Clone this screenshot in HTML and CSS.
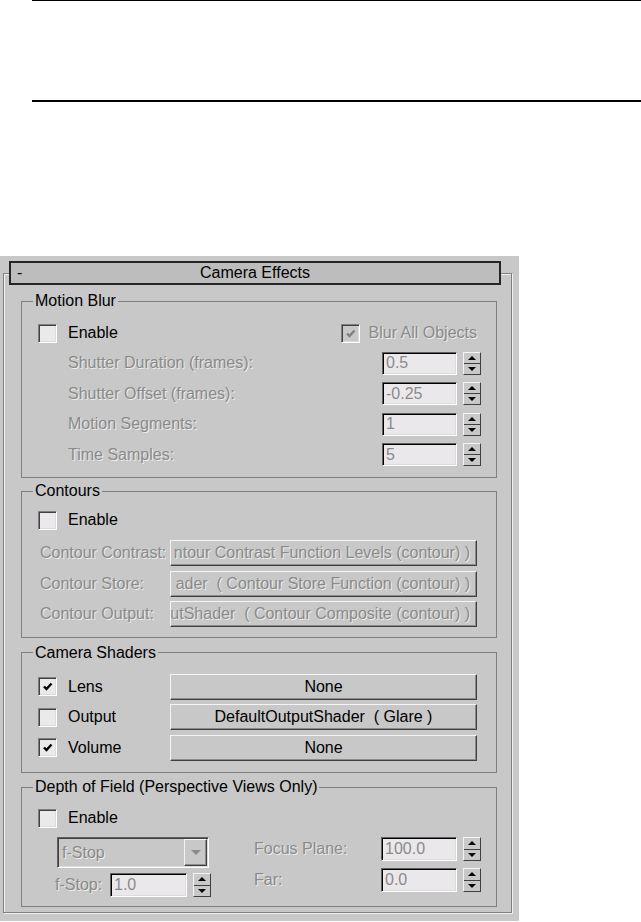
FILE: index.html
```html
<!DOCTYPE html>
<html lang="en">
<head>
    <meta charset="UTF-8">
    <meta name="viewport" content="width=device-width, initial-scale=1.0">
    <title>Camera Effects</title>
    <link rel="stylesheet" href="styles.css">
</head>
<body>
    <div class="doc-rules"></div>

    <div class="panel">
        <div class="rollout-title">
            <span class="rollout-toggle">-</span>
            <span>Camera Effects</span>
        </div>

        <div class="rollout">
            <!-- Motion Blur -->
            <fieldset class="group group-motion">
                <legend>Motion Blur</legend>
                <div class="row-enable">
                    <label class="check-item"><span class="check"></span>Enable</label>
                    <label class="check-item is-disabled"><span class="check is-disabled"><svg viewBox="0 0 13 13"><path d="M3 6.5 L5.5 9 L10.5 3.5"/></svg></span>Blur All Objects</label>
                </div>
                <div class="param-row">
                    <span class="param-label">Shutter Duration (frames):</span>
                    <span class="field">0.5</span>
                    <span class="spin"><span class="spin-up"></span><span class="spin-down"></span></span>
                </div>
                <div class="param-row">
                    <span class="param-label">Shutter Offset (frames):</span>
                    <span class="field">-0.25</span>
                    <span class="spin"><span class="spin-up"></span><span class="spin-down"></span></span>
                </div>
                <div class="param-row">
                    <span class="param-label">Motion Segments:</span>
                    <span class="field">1</span>
                    <span class="spin"><span class="spin-up"></span><span class="spin-down"></span></span>
                </div>
                <div class="param-row">
                    <span class="param-label">Time Samples:</span>
                    <span class="field">5</span>
                    <span class="spin"><span class="spin-up"></span><span class="spin-down"></span></span>
                </div>
            </fieldset>

            <!-- Contours -->
            <fieldset class="group group-contours">
                <legend>Contours</legend>
                <div class="row-enable">
                    <label class="check-item"><span class="check"></span>Enable</label>
                </div>
                <div class="button-rows">
                    <div class="button-row">
                        <span class="button-label">Contour Contrast:</span>
                        <span class="btn is-clipped"><span>ntour Contrast Function Levels (contour) )</span></span>
                    </div>
                    <div class="button-row">
                        <span class="button-label">Contour Store:</span>
                        <span class="btn is-clipped"><span>ader&nbsp; ( Contour Store Function (contour) )</span></span>
                    </div>
                    <div class="button-row">
                        <span class="button-label">Contour Output:</span>
                        <span class="btn is-clipped"><span>utShader&nbsp; ( Contour Composite (contour) )</span></span>
                    </div>
                </div>
            </fieldset>

            <!-- Camera Shaders -->
            <fieldset class="group group-shaders">
                <legend>Camera Shaders</legend>
                <div class="shader-rows">
                    <div class="shader-row">
                        <label class="check-item"><span class="check"><svg viewBox="0 0 13 13"><path d="M3 6.5 L5.5 9 L10.5 3.5"/></svg></span>Lens</label>
                        <span class="btn is-active">None</span>
                    </div>
                    <div class="shader-row">
                        <label class="check-item"><span class="check"></span>Output</label>
                        <span class="btn is-active">DefaultOutputShader&nbsp; ( Glare )</span>
                    </div>
                    <div class="shader-row">
                        <label class="check-item"><span class="check"><svg viewBox="0 0 13 13"><path d="M3 6.5 L5.5 9 L10.5 3.5"/></svg></span>Volume</label>
                        <span class="btn is-active">None</span>
                    </div>
                </div>
            </fieldset>

            <!-- Depth of Field -->
            <fieldset class="group group-dof">
                <legend>Depth of Field (Perspective Views Only)</legend>
                <div class="row-enable">
                    <label class="check-item"><span class="check"></span>Enable</label>
                </div>
                <div class="dof-body">
                    <div class="dof-left">
                        <div class="combo">
                            <span>f-Stop</span>
                            <span class="combo-btn"></span>
                        </div>
                        <div class="dof-row dof-row-fstop">
                            <span class="param-label fstop-label">f-Stop:</span>
                            <span class="field field-fstop">1.0</span>
                            <span class="spin spin-tall"><span class="spin-up"></span><span class="spin-down"></span></span>
                        </div>
                    </div>
                    <div class="dof-right">
                        <div class="dof-row">
                            <span class="param-label dof-label">Focus Plane:</span>
                            <span class="field field-dof">100.0</span>
                            <span class="spin spin-tall"><span class="spin-up"></span><span class="spin-down"></span></span>
                        </div>
                        <div class="dof-row dof-row-far">
                            <span class="param-label dof-label">Far:</span>
                            <span class="field field-dof">0.0</span>
                            <span class="spin spin-tall"><span class="spin-up"></span><span class="spin-down"></span></span>
                        </div>
                    </div>
                </div>
            </fieldset>
        </div>
    </div>
</body>
</html>
```

FILE: styles.css
```css
body {
    margin: 0;
    font-family: "Liberation Sans", Arial, sans-serif;
    font-size: 16px;
    line-height: 18px;
    color: #000;
    background-color: #fff;
}
.doc-rules {
    margin-left: 32px;
    height: 99px;
    border-top: 1px solid #000;
    border-bottom: 2px solid #000;
}
.panel {
    margin-top: 154px;
    width: 519px;
    background-color: #c8c8c8;
    padding: 5px 0 8px;
}
.rollout-title {
    position: relative;
    z-index: 1;
    margin-left: 9px;
    width: 492px;
    height: 24px;
    box-sizing: border-box;
    border: 2px solid #262626;
    background-color: #bdbdbd;
    display: grid;
    grid-template-columns: 1fr auto 1fr;
    align-items: center;
}
.rollout-toggle {
    padding-left: 6px;
}
.rollout {
    margin: -12px 0 0 3px;
    width: 509px;
    box-sizing: border-box;
    border: 1px solid #808080;
    box-shadow: inset 1px 1px 0 #f0f0f0, 1px 1px 0 #f0f0f0;
    padding-bottom: 5px;
}
.group {
    margin: 0 14px 0 17px;
    padding: 0;
    border: 1px solid #808080;
    min-width: 0;
}
.group legend {
    margin-left: 11px;
    padding: 0 2px;
    line-height: 18px;
}
.group-motion {
    margin-top: 18px;
    padding-bottom: 7px;
}
.group-contours {
    margin-top: 4px;
    padding-bottom: 7px;
}
.group-shaders {
    margin-top: 6px;
    padding-bottom: 9px;
}
.group-dof {
    margin-top: 5px;
    padding-bottom: 9px;
}

/* checkboxes */
.row-enable {
    height: 30px;
    display: flex;
    align-items: center;
    justify-content: space-between;
    padding: 0 19px 0 16px;
}
.group-motion .row-enable {
    margin-top: 8px;
}
.group-contours .row-enable {
    margin-top: 5px;
}
.group-dof .row-enable {
    margin-top: 7px;
}
.check-item {
    display: flex;
    align-items: center;
    white-space: nowrap;
}
.check-item.is-disabled {
    color: #8a8a8a;
    text-shadow: 1px 1px 0 #ececec;
}
.check {
    width: 19px;
    height: 19px;
    box-sizing: border-box;
    margin-right: 11px;
    border: 1px solid;
    border-color: #808080 #fff #fff #808080;
    box-shadow: inset 1px 1px 0 #404040, inset -1px -1px 0 #dcdcdc;
    background-color: #ece9ec;
    display: flex;
    align-items: center;
    justify-content: center;
}
.check svg {
    width: 13px;
    height: 13px;
    fill: none;
    stroke: #000;
    stroke-width: 2.4;
}
.check.is-disabled {
    background-color: #c8c8c8;
    margin-right: 9px;
}
.check.is-disabled svg {
    stroke: #808080;
}

/* spinner rows */
.param-row {
    height: 30.5px;
    display: flex;
    align-items: center;
    padding: 0 15px 0 46px;
}
.param-label {
    flex: 1;
    color: #8a8a8a;
    text-shadow: 1px 1px 0 #ececec;
    white-space: nowrap;
}
.field {
    width: 75px;
    height: 23px;
    box-sizing: border-box;
    border: 1px solid;
    border-color: #606060 #fff #fff #606060;
    box-shadow: inset 1px 1px 0 #000, inset -1px -1px 0 #dcdcdc;
    background-color: #ebe8eb;
    color: #8a8a8a;
    padding-left: 3px;
    display: flex;
    align-items: center;
}
.spin {
    width: 18px;
    height: 23px;
    margin-left: 6px;
    box-sizing: border-box;
    border: 1px solid;
    border-color: #f4f4f4 #404040 #404040 #f4f4f4;
    display: flex;
    flex-direction: column;
}
.spin-tall {
    height: 24px;
}
.spin-up, .spin-down {
    flex: 1;
    display: flex;
    align-items: center;
    justify-content: center;
}
.spin-up {
    border-bottom: 1px solid #404040;
}
.spin-up::after {
    content: '';
    border-left: 4px solid transparent;
    border-right: 4px solid transparent;
    border-bottom: 4px solid #000;
}
.spin-down::after {
    content: '';
    border-left: 4px solid transparent;
    border-right: 4px solid transparent;
    border-top: 4px solid #000;
}

/* shader buttons */
.button-rows {
    margin-top: 3px;
}
.button-row {
    height: 30.5px;
    display: flex;
    align-items: center;
    padding: 0 19px 0 18px;
}
.button-label {
    width: 130px;
    flex: none;
    white-space: nowrap;
    color: #8a8a8a;
    text-shadow: 1px 1px 0 #ececec;
}
.btn {
    width: 307px;
    height: 26px;
    box-sizing: border-box;
    border: 1px solid;
    border-color: #f4f4f4 #404040 #404040 #f4f4f4;
    box-shadow: inset -1px -1px 0 #8c8c8c;
    background-color: #c8c8c8;
    display: flex;
    align-items: center;
    justify-content: center;
    white-space: nowrap;
    overflow: hidden;
}
.btn.is-clipped {
    justify-content: flex-end;
    padding-right: 6px;
    color: #8a8a8a;
    text-shadow: 1px 1px 0 #ececec;
}
.shader-rows {
    padding-top: 10px;
}
.shader-row {
    height: 30.5px;
    display: flex;
    align-items: center;
    padding: 0 19px 0 16px;
}
.shader-row .check-item {
    width: 132px;
}

/* depth of field */
.dof-body {
    display: flex;
    margin-top: 4px;
    padding-left: 33px;
}
.dof-left {
    width: 156px;
    margin-right: 43px;
}
.combo {
    margin-left: 2px;
    width: 152px;
    height: 31px;
    box-sizing: border-box;
    border: 1px solid;
    border-color: #606060 #fff #fff #606060;
    box-shadow: inset 1px 1px 0 #404040, inset -1px -1px 0 #dcdcdc;
    padding: 1px 1px 1px 4px;
    display: flex;
    align-items: center;
    color: #8a8a8a;
    text-shadow: 1px 1px 0 #ececec;
}
.combo-btn {
    margin-left: auto;
    width: 23px;
    align-self: stretch;
    box-sizing: border-box;
    border: 1px solid;
    border-color: #f4f4f4 #404040 #404040 #f4f4f4;
    box-shadow: inset -1px -1px 0 #8c8c8c;
    display: flex;
    align-items: center;
    justify-content: center;
}
.combo-btn::after {
    content: '';
    border-left: 5px solid transparent;
    border-right: 5px solid transparent;
    border-top: 5px solid #8a8a8a;
}
.dof-row {
    height: 24px;
    display: flex;
    align-items: center;
}
.dof-row-fstop {
    margin-top: 5px;
}
.dof-row-far {
    margin-top: 7px;
}
.fstop-label {
    flex: none;
    width: 55px;
}
.field-fstop {
    width: 77px;
    height: 24px;
}
.dof-label {
    flex: none;
    width: 127px;
}
.field-dof {
    width: 76px;
    height: 24px;
}
```
